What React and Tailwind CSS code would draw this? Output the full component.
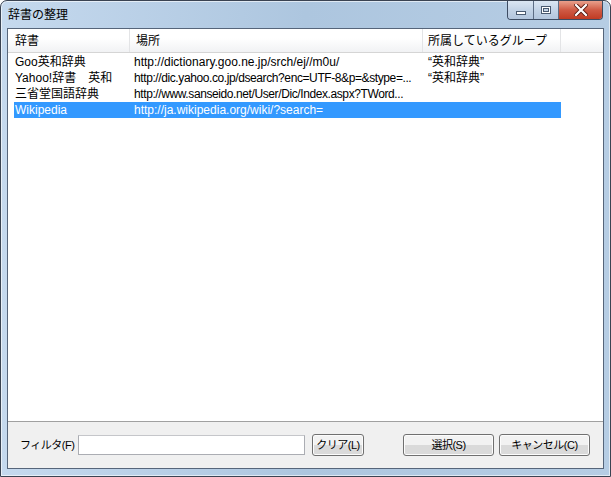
import React from "react";

const font = { fontFamily: '"Liberation Sans", "Noto Sans CJK JP", sans-serif' };

function CaptionButtons() {
  return (
    <div className="flex h-[19px] mr-[7px] rounded-b-[4px] overflow-hidden border border-t-0 border-[#3d4c62]">
      <div className="w-[26px] h-full flex items-center justify-center bg-gradient-to-b from-[#dbe6f2] via-[#c3d3e6] to-[#b3c6dd] border-r border-[#5d6d84]">
        <svg width="12" height="6" viewBox="0 0 12 6" className="mt-[5px]">
          <rect x="1.5" y="1.5" width="9" height="3" fill="#fff" stroke="#4a5a70" strokeWidth="1" />
        </svg>
      </div>
      <div className="w-[25px] h-full flex items-center justify-center bg-gradient-to-b from-[#dbe6f2] via-[#c3d3e6] to-[#b3c6dd] border-r border-[#5d6d84]">
        <svg width="12" height="10" viewBox="0 0 12 10">
          <rect x="1.5" y="1.5" width="9" height="7" fill="none" stroke="#4a5a70" strokeWidth="1" />
          <rect x="2.5" y="2.5" width="7" height="5" fill="none" stroke="#fff" strokeWidth="1" />
          <rect x="3.5" y="3.5" width="5" height="3" fill="none" stroke="#4a5a70" strokeWidth="1" />
        </svg>
      </div>
      <div className="w-[43px] h-full flex items-center justify-center bg-gradient-to-b from-[#e8a08c] via-[#cf5a44] to-[#c03a22]">
        <svg width="14" height="12" viewBox="0 0 14 12">
          <path d="M2 1 L12 11 M12 1 L2 11" stroke="#5a1a10" strokeWidth="4" strokeLinecap="square" />
          <path d="M2 1 L12 11 M12 1 L2 11" stroke="#fff" strokeWidth="2.2" strokeLinecap="square" />
        </svg>
      </div>
    </div>
  );
}

const rows = [
  { a: "Goo英和辞典", b: "http://dictionary.goo.ne.jp/srch/ej//m0u/", c: "“英和辞典”", t: "" },
  { a: "Yahoo!辞書　英和", b: "http://dic.yahoo.co.jp/dsearch?enc=UTF-8&p=&stype=...", c: "“英和辞典”", t: "tracking-[-0.4px]" },
  { a: "三省堂国語辞典", b: "http://www.sanseido.net/User/Dic/Index.aspx?TWord...", c: "", t: "tracking-[-0.4px]" },
  { a: "Wikipedia", b: "http://ja.wikipedia.org/wiki/?search=", c: "", t: "" },
];

function Button({ children, className }) {
  return (
    <div
      className={
        "h-[22px] flex items-center justify-center whitespace-nowrap rounded-[3px] border border-[#707070] bg-gradient-to-b from-[#f2f2f2] from-50% to-[#dadada] to-50% shadow-[inset_0_0_0_1px_#fcfcfc] text-[11px] tracking-[-0.5px] text-black " +
        (className || "")
      }
    >
      {children}
    </div>
  );
}

export default function App() {
  return (
    <div style={font} className="w-[611px] h-[477px] overflow-hidden bg-white">
      <div className="w-[611px] h-[477px] flex flex-col rounded-t-[7px] border border-[#3a4352] bg-gradient-to-r from-[#c5d9ee] via-[#adc6df] to-[#b6cde4] shadow-[inset_0_0_0_1px_rgba(255,255,255,0.6)]">
        <div className="h-[27px] flex justify-between items-start">
          <div className="pl-[7px] pt-[6px] text-[12px] leading-[16px] text-black">辞書の整理</div>
          <CaptionButtons />
        </div>
        <div className="flex-1 mx-[6px] flex flex-col border border-[#56657a] bg-[#f0f0f0]">
          <div className="flex-1 bg-white border-b border-[#a0a0a0] flex flex-col">
            <div className="h-[24px] flex bg-gradient-to-b from-white from-40% to-[#f1f2f4] border-b border-[#d5d5d5] text-[12px] text-black">
              <div className="w-[122px] border-r border-[#e3e4e6] pl-[7px] flex items-center">辞書</div>
              <div className="w-[293px] border-r border-[#e3e4e6] pl-[6px] flex items-center">場所</div>
              <div className="w-[138px] border-r border-[#e3e4e6] pl-[5px] flex items-center">所属しているグループ</div>
              <div className="flex-1" />
            </div>
            <div className="pt-[1px] flex flex-col">
              {rows.map((r, i) => {
                const sel = i === 3;
                return (
                  <div key={i} className="h-[16px] flex text-[12px] leading-[16px] pl-[6px]">
                    <div className={"flex w-[547px] " + (sel ? "bg-[#3399ff] text-white" : "text-black")}>
                      <div className="w-[116px] pl-[1px] whitespace-nowrap">{r.a}</div>
                      <div className={"w-[293px] pl-[4px] whitespace-nowrap " + r.t}>{r.b}</div>
                      <div className="flex-1 pl-[5px] whitespace-nowrap">{r.c}</div>
                    </div>
                  </div>
                );
              })}
            </div>
          </div>
          <div className="h-[46px] flex items-center text-[11px] tracking-[-0.5px] text-black whitespace-nowrap">
            <div className="ml-[12px] w-[58px]">フィルタ(F)</div>
            <div className="w-[227px] h-[20px] border border-[#abadb3] border-t-[#c5c6ca] bg-white" />
            <Button className="ml-[7px] w-[52px]">クリア(L)</Button>
            <Button className="ml-[39px] w-[91px]">選択(S)</Button>
            <Button className="ml-[5px] w-[91px]">キャンセル(C)</Button>
          </div>
        </div>
        <div className="h-[7px]" />
      </div>
    </div>
  );
}
